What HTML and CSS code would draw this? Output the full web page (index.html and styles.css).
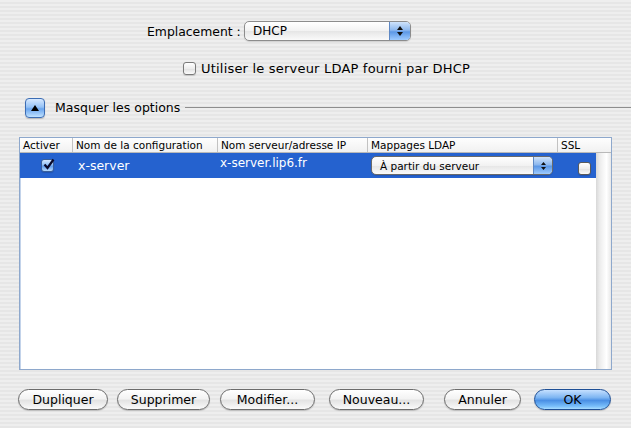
FILE: index.html
```html
<!DOCTYPE html>
<html lang="fr">
<head>
<meta charset="utf-8">
<title>LDAP</title>
<link rel="stylesheet" href="styles.css">
</head>
<body>
<div class="window">
  <div class="loc-row">
    <span class="loc-label">Emplacement :</span>
    <div class="popup">
      <span class="popup-text">DHCP</span>
      <span class="popup-arrows">
        <svg width="8" height="12" viewBox="0 0 8 12"><path d="M4 1 L7 5 L1 5 Z M4 11 L7 7 L1 7 Z" fill="#111"/></svg>
      </span>
    </div>
  </div>
  <div class="check-row">
    <span class="checkbox"></span>
    <span class="check-label">Utiliser le serveur LDAP fourni par DHCP</span>
  </div>
  <div class="disc-row">
    <span class="disclosure">
      <svg width="10" height="8" viewBox="0 0 10 8"><path d="M5 1 L9 7 L1 7 Z" fill="#000"/></svg>
    </span>
    <span class="disc-label">Masquer les options</span>
    <span class="rule"></span>
  </div>
  <div class="table">
    <div class="thead">
      <div class="th c-act">Activer</div>
      <div class="th c-name">Nom de la configuration</div>
      <div class="th c-srv">Nom serveur/adresse IP</div>
      <div class="th c-map">Mappages LDAP</div>
      <div class="th c-ssl">SSL</div>
    </div>
    <div class="tbody">
      <div class="rows">
        <div class="row selected">
          <div class="td c-act"><span class="checkbox checked">
            <svg width="13" height="13" viewBox="0 0 13 13"><path d="M2.5 6.5 L5.5 10 L11.5 1.5" fill="none" stroke="#0a0a2a" stroke-width="2.2"/></svg>
          </span></div>
          <div class="td c-name">x-server</div>
          <div class="td c-srv">x-server.lip6.fr</div>
          <div class="td c-map">
            <div class="popup small">
              <span class="popup-text">À partir du serveur</span>
              <span class="popup-arrows">
                <svg width="7" height="10" viewBox="0 0 7 10"><path d="M3.5 1 L6 4 L1 4 Z M3.5 9 L6 6 L1 6 Z" fill="#111"/></svg>
              </span>
            </div>
          </div>
          <div class="td c-ssl"><span class="checkbox ssl"></span></div>
        </div>
      </div>
      <div class="scrolltrack"></div>
    </div>
  </div>
  <div class="buttons">
    <span class="btn b-dup">Dupliquer</span>
    <span class="btn b-sup">Supprimer</span>
    <span class="btn b-mod">Modifier...</span>
    <span class="btn b-new">Nouveau...</span>
    <span class="btn b-ann">Annuler</span>
    <span class="btn b-ok default">OK</span>
  </div>
</div>
</body>
</html>
```
FILE: styles.css
```css
html, body {
  margin: 0;
  padding: 0;
}
body {
  width: 631px;
  height: 428px;
  overflow: hidden;
  font-family: "DejaVu Sans", "Liberation Sans", sans-serif;
  font-size: 12px;
  color: #000;
  background: repeating-linear-gradient(to bottom, #eeeeee 0, #eeeeee 2px, #e6e6e6 2px, #e6e6e6 4px);
}
.window {
  display: flex;
  flex-direction: column;
  height: 428px;
}

/* location row */
.loc-row {
  display: flex;
  align-items: center;
  margin-top: 21px;
  height: 20px;
  padding-left: 147px;
}
.loc-label {
  width: 97px;
  font-size: 12.4px;
}
.popup {
  display: flex;
  align-items: center;
  width: 167px;
  height: 20px;
  box-sizing: border-box;
  border: 1px solid #8c8c8c;
  border-radius: 5px;
  background: linear-gradient(to bottom, #ffffff 0%, #f2f2f2 50%, #e6e6e6 52%, #fafafa 100%);
  overflow: hidden;
  box-shadow: 0 1px 1px rgba(0,0,0,0.12);
}
.popup-text {
  flex: 1;
  padding-left: 8px;
  white-space: nowrap;
}
.popup-arrows {
  width: 20px;
  height: 100%;
  display: flex;
  align-items: center;
  justify-content: center;
  border-left: 1px solid #5e88c4;
  background: linear-gradient(to bottom, #cfe3fb 0%, #8db8ee 45%, #5c98e6 55%, #9ecbff 100%);
}

/* checkbox row */
.check-row {
  display: flex;
  align-items: center;
  margin-top: 20px;
  height: 14px;
  padding-left: 183px;
  gap: 5px;
}
.check-label {
  font-size: 13px;
  letter-spacing: 0.2px;
}
.checkbox {
  display: inline-flex;
  align-items: center;
  justify-content: center;
  width: 13px;
  height: 13px;
  box-sizing: border-box;
  border: 1px solid #7a7a7a;
  border-radius: 3px;
  background: linear-gradient(to bottom, #ffffff 0%, #ededed 50%, #e2e2e2 55%, #fbfbfb 100%);
  box-shadow: 0 1px 1px rgba(0,0,0,0.15);
}
.checkbox.checked {
  border-color: #3a5f9a;
  background: linear-gradient(to bottom, #d6e8ff 0%, #8ebff7 45%, #5f9bea 55%, #b6dbff 100%);
  overflow: visible;
}
.checkbox.checked svg {
  flex: none;
  margin-top: -3px;
  margin-left: 1px;
}

/* disclosure row */
.disc-row {
  display: flex;
  align-items: center;
  margin-top: 22px;
  height: 21px;
  padding-left: 25px;
}
.disclosure {
  display: flex;
  align-items: center;
  justify-content: center;
  width: 20px;
  height: 20px;
  box-sizing: border-box;
  border: 1px solid #3c6db4;
  border-radius: 4px;
  background: linear-gradient(to bottom, #d7e9ff 0%, #95c2f6 45%, #6aa5ee 55%, #bfe1ff 100%);
  box-shadow: 0 1px 1px rgba(0,0,0,0.2);
}
.disc-label {
  margin-left: 10px;
  font-size: 12.5px;
}
.rule {
  flex: 1;
  height: 1px;
  margin-left: 5px;
  background: #8e8e8e;
}

/* table */
.table {
  margin-top: 19px;
  margin-left: 19px;
  width: 593px;
  height: 233px;
  box-sizing: border-box;
  border: 1px solid #8ea8cc;
  box-shadow: inset 1px 0 0 #c3d3ea;
  background: #fff;
  display: flex;
  flex-direction: column;
}
.thead {
  display: flex;
  height: 15px;
  box-sizing: border-box;
  border-bottom: 1px solid #b9b9b9;
  background: linear-gradient(to bottom, #fefefe, #f1f1f1);
  font-size: 10.5px;
}
.th {
  box-sizing: border-box;
  padding-left: 3px;
  line-height: 14px;
  white-space: nowrap;
  overflow: hidden;
  border-right: 1px solid #c2c2c2;
}
.th.c-ssl {
  border-right: none;
  flex: 1;
}
.c-act { width: 53px; }
.c-name { width: 145px; }
.c-srv { width: 150px; }
.c-map { width: 190px; }
.c-ssl { width: 38px; }

.tbody {
  flex: 1;
  display: flex;
}
.rows {
  flex: 1;
}
.scrolltrack {
  width: 15px;
  background: linear-gradient(to right, #d8d8d8 0%, #ececec 25%, #f7f7f7 50%, #ffffff 70%, #e8e8e8 100%);
}
.row {
  display: flex;
  height: 25px;
  align-items: center;
}
.row.selected {
  background: #2562cf;
  color: #fff;
}
.td {
  box-sizing: border-box;
  white-space: nowrap;
}
.td.c-act {
  display: flex;
  justify-content: center;
  padding-left: 2px;
}
.td.c-name {
  padding-left: 5px;
  font-size: 12.5px;
}
.td.c-srv {
  padding-left: 2px;
  font-size: 12px;
  margin-top: -6px;
}
.td.c-map {
  padding-left: 3px;
  color: #000;
}
.popup.small {
  width: 182px;
  height: 19px;
  font-size: 10.5px;
  border-color: #6a6a6a;
}
.popup.small .popup-arrows {
  width: 18px;
}
.td.c-ssl {
  display: flex;
  justify-content: flex-end;
  padding-right: 5px;
  padding-top: 5px;
}
.checkbox.ssl {
  border-color: #5a5a5a;
}

/* buttons */
.buttons {
  display: flex;
  align-items: center;
  margin-top: 19px;
  height: 21px;
}
.btn {
  display: flex;
  align-items: center;
  justify-content: center;
  height: 21px;
  box-sizing: border-box;
  border: 1px solid #6c6c6c;
  border-radius: 11px;
  background: linear-gradient(to bottom, #ffffff 0%, #f3f3f3 45%, #e3e3e3 55%, #fafafa 100%);
  box-shadow: 0 1px 1px rgba(0,0,0,0.18);
  font-size: 12.5px;
}
.b-dup { margin-left: 18px; width: 90px; }
.b-sup { margin-left: 9px; width: 93px; }
.b-mod { margin-left: 10px; width: 95px; }
.b-new { margin-left: 14px; width: 95px; }
.b-ann { margin-left: 20px; width: 77px; }
.b-ok { margin-left: 13px; width: 77px; }
.btn.default {
  border-color: #1e4f95;
  background: linear-gradient(to bottom, #c5e0ff 0%, #7db5f2 40%, #4a8fe4 55%, #77bdfa 85%, #a8dcff 100%);
}
```
